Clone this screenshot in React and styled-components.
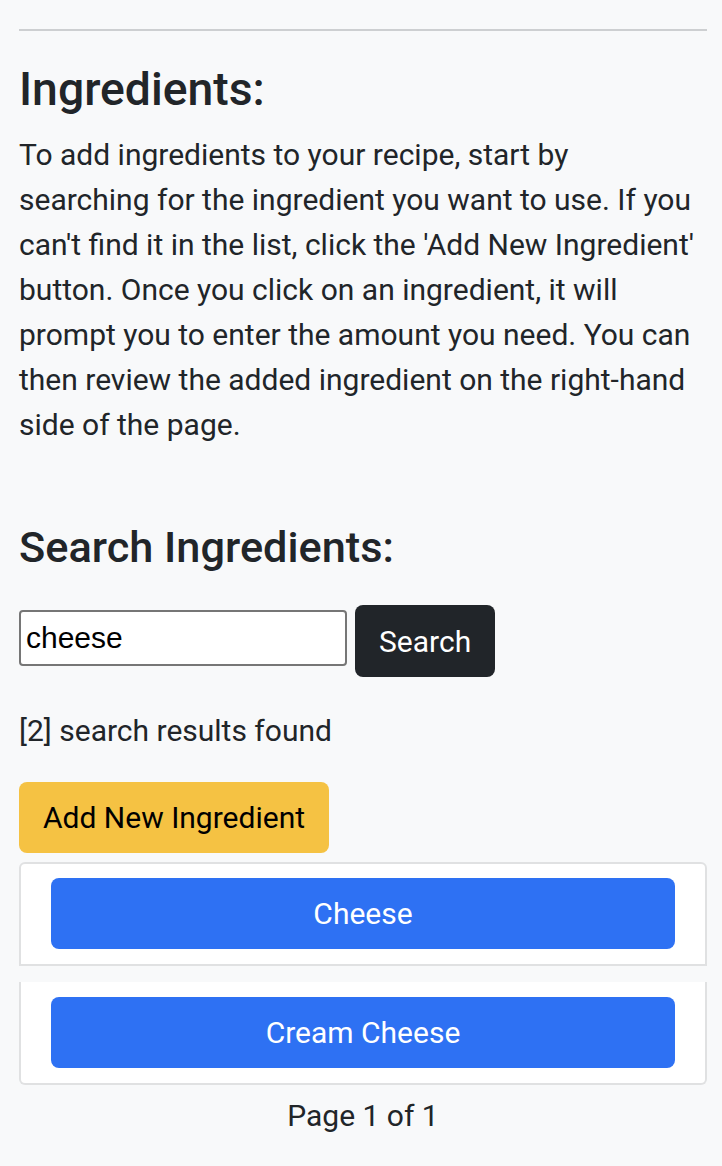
import React, { useState } from 'react';
import styled, { createGlobalStyle } from 'styled-components';

const GlobalStyle = createGlobalStyle`
  body {
    margin: 0;
    background: #f8f9fa;
    color: #212529;
    font-family: Roboto, "Liberation Sans", Arial, sans-serif;
  }
  * {
    box-sizing: border-box;
  }
`;

const Page = styled.div`
  padding: 0 15px 40px 19px;
`;

const Divider = styled.hr`
  margin: 29px 0 31px;
  height: 2px;
  border: 0;
  background: #cdcfd1;
`;

const Heading = styled.h2`
  margin: 0;
  font-size: 46.3px;
  line-height: 55px;
  font-weight: 500;
`;

const SubHeading = styled.h3`
  margin: 75px 0 0;
  font-size: 43.3px;
  line-height: 52px;
  font-weight: 500;
`;

const Text = styled.p`
  margin: ${props => props.$top || 0}px 0 0;
  font-size: 30px;
  line-height: 45px;
  text-align: ${props => props.$center ? 'center' : 'left'};
`;

const Intro = styled(Text)`
  margin-top: 15px;
  max-width: 678px;
`;

const SearchForm = styled.form`
  display: flex;
  align-items: flex-start;
  gap: 8px;
  margin-top: 31px;
`;

const SearchInput = styled.input`
  width: 328px;
  height: 56px;
  margin-top: 5px;
  padding: 0 5px;
  border: 2px solid #767676;
  border-radius: 4px;
  background: #fff;
  font-family: "Liberation Sans", Arial, sans-serif;
  font-size: 30px;
  color: #000;
  outline: none;
`;

const Button = styled.button`
  height: ${props => props.$tall ? 72 : 71}px;
  padding: 0 24px;
  border: 0;
  border-radius: 8px;
  font-family: Roboto, "Liberation Sans", Arial, sans-serif;
  font-size: 30px;
  line-height: 45px;
  cursor: pointer;
  background: ${props => props.$bg};
  color: ${props => props.$color};
  width: ${props => props.$block ? '100%' : 'auto'};
`;

const AddButton = styled(Button)`
  margin-top: 29px;
  display: block;
`;

const ResultList = styled.div`
  display: flex;
  flex-direction: column;
  gap: 16px;
  margin-top: 9px;
`;

const ResultItem = styled.div`
  background: #fff;
  border: 2px solid #e0e1e2;
  padding: 14px 30px 15px;

  &:first-child {
    border-radius: 6px 6px 0 0;
  }

  &:last-child {
    border-top: 0;
    padding-top: 15px;
    border-radius: 0 0 6px 6px;
  }
`;

const RESULTS = ['Cheese', 'Cream Cheese'];

export default function App() {
  const [query, setQuery] = useState('cheese');

  return (
    <Page>
      <GlobalStyle />
      <Divider />
      <Heading>Ingredients:</Heading>
      <Intro>
        To add ingredients to your recipe, start by searching for the ingredient you want to use. If you
        can't find it in the list, click the 'Add New Ingredient' button. Once you click on an ingredient,
        it will prompt you to enter the amount you need. You can then review the added ingredient on the
        right-hand side of the page.
      </Intro>

      <SubHeading>Search Ingredients:</SubHeading>
      <SearchForm onSubmit={e => e.preventDefault()}>
        <SearchInput value={query} onChange={e => setQuery(e.target.value)} />
        <Button type="submit" $tall $bg="#212529" $color="#fff">Search</Button>
      </SearchForm>

      <Text $top={31}>[{RESULTS.length}] search results found</Text>

      <AddButton type="button" $bg="#f5c243" $color="#000">Add New Ingredient</AddButton>

      <ResultList>
        {RESULTS.map(name => (
          <ResultItem key={name}>
            <Button type="button" $block $bg="#2e71f3" $color="#fff">{name}</Button>
          </ResultItem>
        ))}
      </ResultList>

      <Text $top={8} $center>Page 1 of 1</Text>
    </Page>
  );
}
